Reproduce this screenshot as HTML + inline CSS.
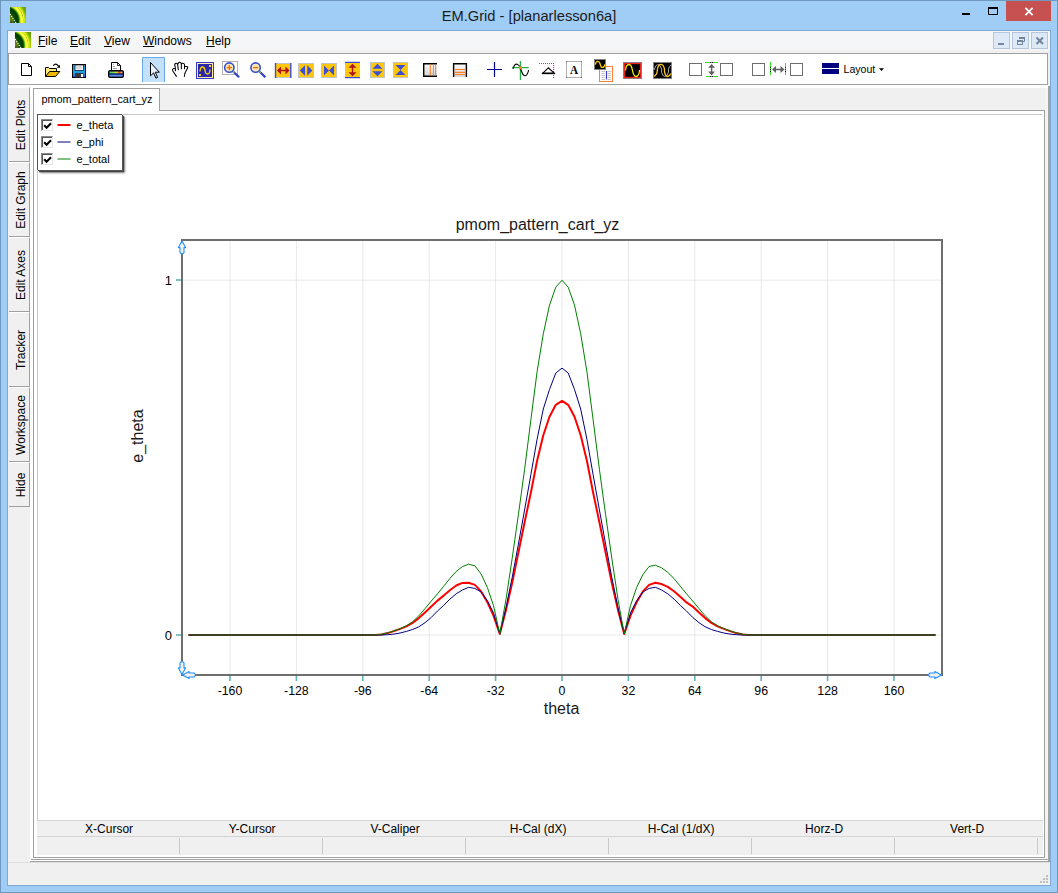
<!DOCTYPE html>
<html lang="en">
<head>
<meta charset="utf-8">
<title>EM.Grid - [planarlesson6a]</title>
<style>
html,body{margin:0;padding:0;}
body{width:1058px;height:893px;overflow:hidden;background:#9fcdf5;font-family:"Liberation Sans",sans-serif;color:#000;position:relative;}
.a{position:absolute;box-sizing:border-box;}
#frame{left:0;top:0;width:1058px;height:893px;border:1px solid #7097bd;background:#9fcdf5;}
#inner{left:7px;top:30px;width:1044px;height:856px;border:1px solid #7ea9d4;}
#title{left:0;top:5.5px;width:1058px;text-align:center;font-size:14.7px;line-height:20px;color:#1c1c1c;}
#client{left:8px;top:31px;width:1042px;height:854px;background:#f0f0f0;}
#menubar{left:8px;top:31px;width:1042px;height:19px;background:#f5f6f7;}
.mi{font-size:12px;line-height:16px;top:33px;}
.mi u{text-decoration:underline;}
.mdib{top:32px;width:17px;height:17px;background:#dde9f6;border:1px solid #b4c6dd;}
#toolbar{left:8px;top:53px;width:1040px;height:32px;background:#fff;border:1px solid #a0a0a0;}
.stab{left:9px;width:21px;background:#f0f0f0;border-top:1px solid #fff;border-bottom:1px solid #a0a0a0;border-right:1px solid #a0a0a0;}
.stab span{position:absolute;left:calc(50% + 1.5px);top:50%;transform:translate(-50%,-50%) rotate(-90deg);white-space:nowrap;font-size:12px;line-height:14px;}
#mainwhite{left:8px;top:85px;width:1040px;height:776px;background:#fff;}
#sidebg{left:8px;top:88px;width:22px;height:774px;background:#f0f0f0;}
#tabstrip{left:160px;top:88px;width:888px;height:22px;background:#f0f0f0;}
#rb{left:1048px;top:86px;width:2px;height:776px;background:#a2a2a2;}
#rstrip{left:1045px;top:88px;width:3px;height:771px;background:#f4f4f4;}
#b1{left:31px;top:859px;width:1018px;height:1px;background:#a2a2a2;}
#b2{left:30px;top:861px;width:1020px;height:1px;background:#a2a2a2;}
#stl{left:8px;top:862px;width:1042px;height:1px;background:#dedede;}
#tabpanel{left:33px;top:110px;width:1012px;height:748px;background:#fff;border:1px solid #a0a0a0;}
#tab{left:33px;top:88px;width:127px;height:23px;background:#fff;border:1px solid #a0a0a0;border-bottom:none;font-size:10.85px;line-height:21px;padding-left:7.5px;}
#hdr{left:37px;top:820px;width:1006px;height:17px;background:#f0f0f0;border-top:1px solid #d4d4d4;border-bottom:1px solid #d4d4d4;}
#cells{left:37px;top:837px;width:1006px;height:18px;background:#f0f0f0;}
.hc{top:822px;width:143px;text-align:center;font-size:12px;line-height:14px;}
.cs{top:838px;width:1px;height:16px;background:#c8c8c8;}
#graph{left:37px;top:114px;width:1005px;height:707px;background:#fff;border-left:1px solid #c8c8c8;border-top:1px solid #c8c8c8;}
#legend{left:37px;top:114px;width:84.5px;height:56px;background:#fff;border-top:1px solid #555;border-left:1px solid #555;box-shadow:1px 1px 0 #555,2px 2px 1px #444,3px 3px 2px rgba(0,0,0,.45);}
.cb{left:41px;width:12px;height:12px;background:#fff;border-top:1px solid #8a8a8a;border-left:1px solid #8a8a8a;border-right:1px solid #e8e8e8;border-bottom:1px solid #e8e8e8;box-shadow:inset 1px 1px 0 #555;}
.lt{left:76.6px;font-size:11px;line-height:12px;}
#status{left:8px;top:862px;width:1042px;height:23px;background:#f0f0f0;}
</style>
</head>
<body>
<div class="a" id="frame"></div>
<div class="a" id="inner"></div>
<div class="a" id="title">EM.Grid - [planarlesson6a]</div>
<div class="a" id="client"></div>
<div class="a" id="menubar"></div>
<div class="a mi" style="left:38px"><u>F</u>ile</div>
<div class="a mi" style="left:70px"><u>E</u>dit</div>
<div class="a mi" style="left:104px"><u>V</u>iew</div>
<div class="a mi" style="left:143px"><u>W</u>indows</div>
<div class="a mi" style="left:206px"><u>H</u>elp</div>
<div class="a mdib" style="left:993px"></div>
<div class="a mdib" style="left:1012px"></div>
<div class="a mdib" style="left:1031px"></div>
<div class="a" id="mainwhite"></div>
<div class="a" id="sidebg"></div>
<div class="a" id="tabstrip"></div>
<div class="a" id="rstrip"></div>
<div class="a" id="rb"></div>
<div class="a" id="b1"></div>
<div class="a" id="b2"></div>
<div class="a" id="toolbar"></div>
<div class="a stab" style="top:87px;height:75px"><span>Edit Plots</span></div>
<div class="a stab" style="top:162px;height:75px"><span>Edit Graph</span></div>
<div class="a stab" style="top:237px;height:75px"><span>Edit Axes</span></div>
<div class="a stab" style="top:312px;height:75px"><span>Tracker</span></div>
<div class="a stab" style="top:387px;height:75px"><span>Workspace</span></div>
<div class="a stab" style="top:462px;height:45px"><span>Hide</span></div>
<div class="a" id="tabpanel"></div>
<div class="a" id="tab">pmom_pattern_cart_yz</div>
<div class="a" id="graph"></div>
<svg class="a" id="chart" style="left:36px;top:112px" width="1007" height="708" viewBox="36 112 1007 708" font-family="Liberation Sans, sans-serif">
<line x1="230.0" y1="241" x2="230.0" y2="674" stroke="#d2d2d2" stroke-width="1" stroke-dasharray="1 1" stroke-dashoffset="0.3"/>
<line x1="296.4" y1="241" x2="296.4" y2="674" stroke="#d2d2d2" stroke-width="1" stroke-dasharray="1 1" stroke-dashoffset="0.3"/>
<line x1="362.8" y1="241" x2="362.8" y2="674" stroke="#d2d2d2" stroke-width="1" stroke-dasharray="1 1" stroke-dashoffset="0.3"/>
<line x1="429.2" y1="241" x2="429.2" y2="674" stroke="#d2d2d2" stroke-width="1" stroke-dasharray="1 1" stroke-dashoffset="0.3"/>
<line x1="495.6" y1="241" x2="495.6" y2="674" stroke="#d2d2d2" stroke-width="1" stroke-dasharray="1 1" stroke-dashoffset="0.3"/>
<line x1="562.0" y1="241" x2="562.0" y2="674" stroke="#d2d2d2" stroke-width="1" stroke-dasharray="1 1" stroke-dashoffset="0.3"/>
<line x1="628.4" y1="241" x2="628.4" y2="674" stroke="#d2d2d2" stroke-width="1" stroke-dasharray="1 1" stroke-dashoffset="0.3"/>
<line x1="694.8" y1="241" x2="694.8" y2="674" stroke="#d2d2d2" stroke-width="1" stroke-dasharray="1 1" stroke-dashoffset="0.3"/>
<line x1="761.2" y1="241" x2="761.2" y2="674" stroke="#d2d2d2" stroke-width="1" stroke-dasharray="1 1" stroke-dashoffset="0.3"/>
<line x1="827.6" y1="241" x2="827.6" y2="674" stroke="#d2d2d2" stroke-width="1" stroke-dasharray="1 1" stroke-dashoffset="0.3"/>
<line x1="894.0" y1="241" x2="894.0" y2="674" stroke="#d2d2d2" stroke-width="1" stroke-dasharray="1 1" stroke-dashoffset="0.3"/>
<line x1="183" y1="280.2" x2="941" y2="280.2" stroke="#d2d2d2" stroke-width="1" stroke-dasharray="1 1" stroke-dashoffset="0.3"/>
<line x1="183" y1="635.0" x2="941" y2="635.0" stroke="#d2d2d2" stroke-width="1" stroke-dasharray="1 1" stroke-dashoffset="0.3"/>
<polyline points="188.5,635.0 375.2,635.0 381.5,634.4 387.7,633.1 393.9,631.1 400.1,628.9 406.4,626.3 412.6,622.9 418.8,618.1 425.0,612.5 431.3,606.6 437.5,600.6 443.7,595.6 449.9,590.2 456.2,585.5 462.4,582.9 468.6,582.8 474.9,584.9 481.1,591.4 487.3,602.0 493.5,615.6 499.8,634.0 506.0,610.1 512.2,582.9 518.4,552.5 524.6,522.3 530.9,492.5 537.1,460.8 543.3,435.2 549.5,416.8 555.8,404.8 562.0,400.9 568.2,404.8 574.5,416.8 580.7,435.2 586.9,460.8 593.1,492.5 599.4,522.3 605.6,552.5 611.8,582.9 618.0,610.1 624.2,634.0 630.5,615.6 636.7,602.0 642.9,591.4 649.1,584.9 655.4,582.8 661.6,584.1 667.8,586.9 674.0,591.2 680.3,596.7 686.5,602.4 692.7,606.6 699.0,612.5 705.2,618.1 711.4,622.9 717.6,626.3 723.9,628.9 730.1,631.1 736.3,633.1 742.5,634.4 748.8,635.0 935.5,635.0" fill="none" stroke="#ff0000" stroke-width="2" stroke-linejoin="round"/>
<polyline points="188.5,635.0 375.2,635.0 381.5,635.0 387.7,634.7 393.9,634.1 400.1,633.0 406.4,631.4 412.6,629.5 418.8,626.8 425.0,622.7 431.3,617.4 437.5,611.0 443.7,605.4 449.9,599.1 456.2,593.8 462.4,590.0 468.6,587.3 474.9,588.4 481.1,592.0 487.3,600.6 493.5,612.9 499.8,634.0 506.0,607.6 512.2,577.4 518.4,544.1 524.6,509.9 530.9,474.6 537.1,439.2 543.3,409.0 549.5,389.5 555.8,373.0 562.0,368.1 568.2,373.0 574.5,389.5 580.7,409.0 586.9,439.2 593.1,474.6 599.4,509.9 605.6,544.1 611.8,577.4 618.0,607.6 624.2,634.0 630.5,612.9 636.7,600.6 642.9,592.0 649.1,588.4 655.4,587.3 661.6,590.0 667.8,593.8 674.0,599.1 680.3,605.4 686.5,611.0 692.7,617.4 699.0,622.7 705.2,626.8 711.4,629.5 717.6,631.4 723.9,633.0 730.1,634.1 736.3,634.7 742.5,635.0 748.8,635.0 935.5,635.0" fill="none" stroke="#000080" stroke-width="1" stroke-linejoin="round"/>
<polyline points="188.5,635.0 375.2,635.0 381.5,634.2 387.7,632.9 393.9,630.8 400.1,628.7 406.4,625.7 412.6,621.8 418.8,615.8 425.0,608.6 431.3,601.0 437.5,593.8 443.7,586.3 449.9,578.5 456.2,571.5 462.4,566.6 468.6,564.2 474.9,565.8 481.1,574.0 487.3,587.3 493.5,605.6 499.8,634.0 506.0,599.4 512.2,558.2 518.4,514.6 524.6,469.3 530.9,419.6 537.1,371.6 543.3,333.8 549.5,305.1 555.8,287.2 562.0,280.2 568.2,287.2 574.5,305.1 580.7,333.8 586.9,371.6 593.1,419.6 599.4,469.3 605.6,514.6 611.8,558.2 618.0,599.4 624.2,634.0 630.5,605.6 636.7,587.3 642.9,574.6 649.1,566.5 655.4,565.2 661.6,567.8 667.8,572.4 674.0,578.5 680.3,586.3 686.5,593.8 692.7,601.0 699.0,608.6 705.2,615.8 711.4,621.8 717.6,625.7 723.9,628.7 730.1,630.8 736.3,632.9 742.5,634.2 748.8,635.0 935.5,635.0" fill="none" stroke="#008000" stroke-width="1" stroke-linejoin="round"/>
<rect x="182" y="240" width="760" height="435" fill="none" stroke="#6e6e6e" stroke-width="2"/>
<line x1="230.0" y1="676" x2="230.0" y2="681" stroke="#62b0b0" stroke-width="1.6"/>
<text transform="translate(230.0,695) scale(0.95,1)" font-size="13" text-anchor="middle">-160</text>
<line x1="296.4" y1="676" x2="296.4" y2="681" stroke="#62b0b0" stroke-width="1.6"/>
<text transform="translate(296.4,695) scale(0.95,1)" font-size="13" text-anchor="middle">-128</text>
<line x1="362.8" y1="676" x2="362.8" y2="681" stroke="#62b0b0" stroke-width="1.6"/>
<text transform="translate(362.8,695) scale(0.95,1)" font-size="13" text-anchor="middle">-96</text>
<line x1="429.2" y1="676" x2="429.2" y2="681" stroke="#62b0b0" stroke-width="1.6"/>
<text transform="translate(429.2,695) scale(0.95,1)" font-size="13" text-anchor="middle">-64</text>
<line x1="495.6" y1="676" x2="495.6" y2="681" stroke="#62b0b0" stroke-width="1.6"/>
<text transform="translate(495.6,695) scale(0.95,1)" font-size="13" text-anchor="middle">-32</text>
<line x1="562.0" y1="676" x2="562.0" y2="681" stroke="#62b0b0" stroke-width="1.6"/>
<text transform="translate(562.0,695) scale(0.95,1)" font-size="13" text-anchor="middle">0</text>
<line x1="628.4" y1="676" x2="628.4" y2="681" stroke="#62b0b0" stroke-width="1.6"/>
<text transform="translate(628.4,695) scale(0.95,1)" font-size="13" text-anchor="middle">32</text>
<line x1="694.8" y1="676" x2="694.8" y2="681" stroke="#62b0b0" stroke-width="1.6"/>
<text transform="translate(694.8,695) scale(0.95,1)" font-size="13" text-anchor="middle">64</text>
<line x1="761.2" y1="676" x2="761.2" y2="681" stroke="#62b0b0" stroke-width="1.6"/>
<text transform="translate(761.2,695) scale(0.95,1)" font-size="13" text-anchor="middle">96</text>
<line x1="827.6" y1="676" x2="827.6" y2="681" stroke="#62b0b0" stroke-width="1.6"/>
<text transform="translate(827.6,695) scale(0.95,1)" font-size="13" text-anchor="middle">128</text>
<line x1="894.0" y1="676" x2="894.0" y2="681" stroke="#62b0b0" stroke-width="1.6"/>
<text transform="translate(894.0,695) scale(0.95,1)" font-size="13" text-anchor="middle">160</text>
<line x1="176" y1="280" x2="181" y2="280" stroke="#62b0b0" stroke-width="1.6"/>
<text x="172" y="285" font-size="13" text-anchor="end">1</text>
<line x1="176" y1="635" x2="181" y2="635" stroke="#62b0b0" stroke-width="1.6"/>
<text x="172" y="640" font-size="13" text-anchor="end">0</text>
<text x="537.5" y="230" font-size="16" text-anchor="middle" fill="#1a1a1a">pmom_pattern_cart_yz</text>
<text x="561.5" y="714" font-size="16" text-anchor="middle" fill="#1a1a1a">theta</text>
<text transform="translate(143,436) rotate(-90)" font-size="16" text-anchor="middle" fill="#1a1a1a">e_theta</text>
<path d="M182,241 L178.4,247.6 L180,247.6 L180,252.6 Q182,255 184,252.6 L184,247.6 L185.6,247.6 Z" fill="#f6f1ea" stroke="#1e90ff" stroke-width="1.1" stroke-linejoin="round"/>
<path d="M182,674.5 L178.4,667.9 L180,667.9 L180,662.9 Q182,660.5 184,662.9 L184,667.9 L185.6,667.9 Z" fill="#f6f1ea" stroke="#1e90ff" stroke-width="1.1" stroke-linejoin="round"/>
<path d="M182.5,675 L189.1,671.4 L189.1,673 L194.1,673 Q196.5,675 194.1,677 L189.1,677 L189.1,678.6 Z" fill="#f6f1ea" stroke="#1e90ff" stroke-width="1.1" stroke-linejoin="round"/>
<path d="M941.5,675 L934.9,671.4 L934.9,673 L929.9,673 Q927.5,675 929.9,677 L934.9,677 L934.9,678.6 Z" fill="#f6f1ea" stroke="#1e90ff" stroke-width="1.1" stroke-linejoin="round"/>
</svg>
<div class="a" id="legend"></div>
<div class="a cb" style="top:119px"></div>
<div class="a cb" style="top:136px"></div>
<div class="a cb" style="top:153px"></div>
<div class="a lt" style="top:119px">e_theta</div>
<div class="a lt" style="top:136px">e_phi</div>
<div class="a lt" style="top:153px">e_total</div>
<svg class="a" style="left:37px;top:114px" width="90" height="60" viewBox="37 114 90 60">
<path d="M57.5,125 H70.5" stroke="#ff0000" stroke-width="2"/>
<path d="M57.5,142 H70.5" stroke="#000080" stroke-width="1"/>
<path d="M57.5,159 H70.5" stroke="#008000" stroke-width="1"/>
<path d="M44.2,125.2 L46.6,127.7 L51,123.2 M44.2,142.2 L46.6,144.7 L51,140.2 M44.2,159.2 L46.6,161.7 L51,157.2" stroke="#000" stroke-width="2" fill="none"/>
</svg>
<div class="a" id="hdr"></div>
<div class="a" id="cells"></div>
<div class="a hc" style="left:37.6px">X-Cursor</div>
<div class="a hc" style="left:180.6px">Y-Cursor</div>
<div class="a hc" style="left:323.6px">V-Caliper</div>
<div class="a hc" style="left:466.6px">H-Cal (dX)</div>
<div class="a hc" style="left:609.6px">H-Cal (1/dX)</div>
<div class="a hc" style="left:752.6px">Horz-D</div>
<div class="a hc" style="left:895.6px">Vert-D</div>
<div class="a cs" style="left:179px"></div>
<div class="a cs" style="left:322px"></div>
<div class="a cs" style="left:465px"></div>
<div class="a cs" style="left:608px"></div>
<div class="a cs" style="left:751px"></div>
<div class="a cs" style="left:894px"></div>
<div class="a cs" style="left:1037px"></div>
<div class="a" id="status"></div>
<div class="a" id="stl"></div>
<svg class="a" id="icons" style="left:0;top:0" width="1058" height="893" viewBox="0 0 1058 893" font-family="Liberation Sans, sans-serif">
<defs>
<radialGradient id="gi" gradientUnits="userSpaceOnUse" cx="-5" cy="13.5" r="24"><stop offset="0.000" stop-color="#7c9c14"/><stop offset="0.312" stop-color="#587e08"/><stop offset="0.396" stop-color="#0c4c0a"/><stop offset="0.550" stop-color="#043a04"/><stop offset="0.600" stop-color="#3c9c10"/><stop offset="0.642" stop-color="#d0ec20"/><stop offset="0.679" stop-color="#ffff40"/><stop offset="0.733" stop-color="#ffff38"/><stop offset="0.758" stop-color="#b4c430"/><stop offset="0.783" stop-color="#f2f830"/><stop offset="0.842" stop-color="#a8d800"/><stop offset="0.917" stop-color="#74aa00"/><stop offset="1.000" stop-color="#6a9e00"/></radialGradient>
<g id="appicon"><rect x="0" y="0" width="16" height="16" fill="url(#gi)"/><path d="M0,7 L6,16" stroke="#fff" stroke-width="1.2" stroke-dasharray="1.2 1.2" fill="none"/><rect x="0" y="14" width="2" height="2" fill="#444" opacity="0.7"/></g>
<linearGradient id="gg" x1="0" y1="0" x2="0" y2="1"><stop offset="0" stop-color="#fafafa"/><stop offset="1" stop-color="#d4d4d4"/></linearGradient>
<linearGradient id="gs" x1="0" y1="0" x2="0" y2="1"><stop offset="0" stop-color="#18a8f0"/><stop offset="0.7" stop-color="#18a0ee"/><stop offset="1" stop-color="#3838d8"/></linearGradient>
<linearGradient id="gp" x1="0" y1="0" x2="1" y2="0"><stop offset="0" stop-color="#30d070"/><stop offset="0.55" stop-color="#c8f020"/><stop offset="0.75" stop-color="#ff3020"/><stop offset="1" stop-color="#ffd020"/></linearGradient>
</defs>
<use href="#appicon" x="10" y="7"/>
<use href="#appicon" x="15" y="32"/>
<rect x="962" y="13" width="8" height="2" fill="#000"/>
<path d="M988.5,8 H997.5 V14.5 H988.5 Z" fill="none" stroke="#000" stroke-width="1"/><rect x="988" y="7" width="10" height="2" fill="#000"/>
<rect x="1006" y="1" width="45" height="20" fill="#c75050"/>
<path d="M1025.4,7.9 L1032.6,15.1 M1032.6,7.9 L1025.4,15.1" stroke="#fff" stroke-width="1.8" fill="none"/>
<rect x="998" y="43" width="6" height="2" fill="#73859c"/>
<path d="M1019.5,39 V37.5 H1024.5 V41.5 H1023" fill="none" stroke="#73859c" stroke-width="1"/><rect x="1019" y="37" width="6" height="2" fill="#73859c"/><rect x="1017.5" y="40.5" width="5" height="4" fill="none" stroke="#73859c" stroke-width="1"/><rect x="1017" y="40" width="6" height="2" fill="#73859c"/>
<path d="M1036.5,37.5 L1043,44 M1043,37.5 L1036.5,44" stroke="#73859c" stroke-width="2" fill="none"/>
<path d="M21.5,63.5 H28.5 L31.5,66.5 V75.5 H21.5 Z" fill="#fff" stroke="#000" stroke-width="1"/><path d="M28.5,63.5 V66.5 H31.5" fill="none" stroke="#000" stroke-width="1"/>
<path d="M45.5,76.5 V67.5 H48.5 L49.5,68.5 H56.5 V71" fill="#ffe880" stroke="#000" stroke-width="1"/>
<path d="M45.5,76.5 L49.5,71.5 H59.8 L55.5,76.5 Z" fill="#f0b800" stroke="#000" stroke-width="1"/>
<path d="M53.3,65.7 Q55.8,62.4 58.6,66.4" fill="none" stroke="#000" stroke-width="1.25"/><path d="M56.8,67.8 H60 V64.8 Z" fill="#000"/>
<rect x="72.5" y="64.5" width="13" height="13" fill="url(#gs)" stroke="#000" stroke-width="1"/>
<rect x="75" y="65" width="8.5" height="5.5" fill="#fff" stroke="#000" stroke-width="0.7"/><rect x="76" y="66" width="6" height="3.5" fill="#d8d8d8"/>
<rect x="75" y="73" width="8.5" height="4.5" fill="#383838"/><rect x="81" y="74" width="2" height="3" fill="#fff"/><rect x="84" y="65.5" width="1" height="1" fill="#666"/>
<path d="M111.5,70.5 V62.5 H117.5 L120.5,65.5 V70.5 Z" fill="#fff" stroke="#000" stroke-width="1"/><path d="M117.5,62.5 V65.5 H120.5" fill="none" stroke="#000" stroke-width="0.8"/>
<path d="M113,64.5 H114 M113,66.5 H115 M113,68.5 H117" stroke="#888" stroke-width="0.8"/>
<rect x="108.5" y="70.5" width="15" height="7" rx="1.2" fill="#101040" stroke="#000" stroke-width="1"/>
<rect x="109.5" y="71.6" width="13" height="1.8" fill="url(#gp)"/><rect x="109.5" y="73.6" width="13" height="1" fill="#0838a0"/><rect x="109.5" y="74.8" width="13" height="1.8" fill="#5a8ae0"/>
<rect x="142" y="57" width="23" height="25" fill="#c3e0fd"/><path d="M142.5,82 V57.5 H164.5 V82" fill="none" stroke="#6aa8e8" stroke-width="1"/>
<path d="M150.5,62.5 V75.8 L153.6,72.9 L155.9,78.2 L157.6,77.4 L155.3,72.2 H159.3 Z" fill="#e8f2fc" stroke="#000" stroke-width="1" stroke-linejoin="miter"/>
<path d="M176.4,76.4 L173.3,71.8 Q171.6,69.2 173.7,68.4 L175.4,68.4 M175.5,70.8 L175.2,66.8 Q174.1,64 175.4,63.4 Q176.9,62.9 177.6,64.4 L178.3,69.8 M177.9,64.2 Q178.4,62.3 179.6,62.3 Q181,62.3 181.3,63.5 L181.4,68.8 M181.5,63.9 Q182.3,63 183,63.2 Q184.4,63.4 184.5,64.8 L184.5,68.8 M185.2,66.5 L186.7,66.5 Q188.1,66.9 187.6,68.1 L185.5,72 L184.7,74 L184.4,76.4" fill="none" stroke="#000" stroke-width="1.05" stroke-linecap="round" stroke-linejoin="round"/>
<rect x="196.5" y="62.5" width="17" height="16" fill="#2828a8" stroke="#3838c8" stroke-width="1"/><rect x="197.5" y="63.5" width="15" height="14" fill="none" stroke="#ffe9a8" stroke-width="1"/>
<path d="M200,71.5 Q200.2,67 202.5,67 Q204.6,67 205,70.5 Q205.4,74 207.5,74 Q209.8,74 210,69.5" fill="none" stroke="#ffd000" stroke-width="1.3"/><rect x="209" y="65" width="2" height="2" fill="#ffd000"/><rect x="199" y="74" width="2" height="2" fill="#ffd000"/>
<rect x="222.5" y="61.5" width="15" height="13" fill="none" stroke="#b4b4b4" stroke-width="1"/>
<path d="M232.9,71.2 L239.1,77.3" stroke="#3040c8" stroke-width="2.2" fill="none"/>
<path d="M232.7,71 L234.3,72.6" stroke="#a0d020" stroke-width="1.5" fill="none"/>
<circle cx="229.3" cy="67.6" r="4.7" fill="#f8e8b4" stroke="#3a50d0" stroke-width="1.6"/>
<path d="M226.6,67.6 H232.0" stroke="#ff6a00" stroke-width="1.3"/>
<path d="M229.3,65 V70.3" stroke="#ff6a00" stroke-width="1.3"/>
<path d="M259.2,71.2 L265.4,77.3" stroke="#3040c8" stroke-width="2.2" fill="none"/>
<path d="M259.0,71 L260.6,72.6" stroke="#a0d020" stroke-width="1.5" fill="none"/>
<circle cx="255.6" cy="67.6" r="4.7" fill="#f8e8b4" stroke="#3a50d0" stroke-width="1.6"/>
<path d="M252.9,67.6 H258.3" stroke="#ff6a00" stroke-width="1.3"/>
<rect x="275.5" y="63.5" width="15" height="14" fill="#ffc60a" stroke="#c4c4c4" stroke-width="1"/>
<path d="M275.5,63 V78 M290.8,63 V78" stroke="#3c4fd2" stroke-width="1.4"/>
<path d="M277,70.5 L281,66.5 V69.8 H285.5 V66.5 L289.5,70.5 L285.5,74.5 V71.2 H281 V74.5 Z" fill="#b0121e"/>
<rect x="298.5" y="63.5" width="15" height="14" fill="#ffc60a" stroke="#c4c4c4" stroke-width="1"/>
<path d="M299.8,70.5 L305,65.3 V75.7 Z M312.4,70.5 L307.3,65.3 V75.7 Z" fill="#3c4fd2"/>
<rect x="321.5" y="63.5" width="15" height="14" fill="#ffc60a" stroke="#c4c4c4" stroke-width="1"/>
<path d="M324,65.5 L329,70.5 L334,65.5 V75.5 L329,70.5 L324,75.5 Z" fill="#3c4fd2"/>
<rect x="345.5" y="62.5" width="14" height="15" fill="#ffc60a" stroke="#c4c4c4" stroke-width="1"/>
<path d="M345,62.4 H360 M345,77.6 H360" stroke="#3c4fd2" stroke-width="1.4"/>
<path d="M352.5,63.8 L356.5,67.8 H353.2 V72.2 H356.5 L352.5,76.2 L348.5,72.2 H351.8 V67.8 H348.5 Z" fill="#b0121e"/>
<rect x="370.5" y="62.5" width="14" height="15" fill="#ffc60a" stroke="#c4c4c4" stroke-width="1"/>
<path d="M377.5,63.8 L382.5,68.8 H372.5 Z M377.5,76.2 L382.5,71.2 H372.5 Z" fill="#3c4fd2"/>
<rect x="393.5" y="62.5" width="14" height="15" fill="#ffc60a" stroke="#c4c4c4" stroke-width="1"/>
<path d="M395.5,65 H405.5 L400.5,70 L405.5,75 H395.5 L400.5,70 Z" fill="#3c4fd2"/>
<rect x="424" y="64" width="13" height="12" fill="url(#gg)"/><path d="M437,63.7 H423.7 V76.3 H437" fill="none" stroke="#000" stroke-width="1.4"/>
<path d="M430.3,64.5 V75.5 M433.4,64.5 V75.5 M435.6,64.5 V75.5" stroke="#ff7f20" stroke-width="1"/>
<rect x="454" y="64" width="12" height="13" fill="url(#gg)"/><path d="M453.6,77 V63.7 H466.4 V77" fill="none" stroke="#000" stroke-width="1.4"/>
<path d="M454.5,69.5 H465.5 M454.5,72.3 H465.5 M454.5,74.5 H465.5" stroke="#ff7f20" stroke-width="1.2"/>
<path d="M487,69.5 H502 M494.5,62 V77" stroke="#000090" stroke-width="1.2"/>
<path d="M520.4,61 V80 M512,67.6 H528.8" stroke="#22b048" stroke-width="1.2"/>
<path d="M513,68.8 Q514.5,63.8 517,64.2 Q519,64.6 520.4,68 Q522,73.5 523.5,75 Q525.5,76.6 527,74.5 Q528.3,72.5 528.6,70" fill="none" stroke="#000" stroke-width="1.1"/>
<rect x="519" y="66.2" width="3" height="3" fill="#ff7f20"/>
<path d="M539,63.5 H554" stroke="#ff00ff" stroke-width="1.2" stroke-dasharray="1 1" fill="none"/><path d="M553.6,65 V78" stroke="#ff00ff" stroke-width="1.2" stroke-dasharray="1 1" fill="none"/>
<path d="M548.3,67.8 L542.8,73.2 H554.2 Z" fill="#fff" stroke="#000" stroke-width="1.1" stroke-linejoin="miter"/><path d="M542,73.4 H555" stroke="#000" stroke-width="1.5"/>
<rect x="566.5" y="61.5" width="15" height="16" fill="#fff" stroke="#b0b0b0" stroke-width="1"/>
<rect x="566" y="61" width="1" height="1" fill="#666"/><rect x="581" y="61" width="1" height="1" fill="#666"/><rect x="566" y="77" width="1" height="1" fill="#666"/><rect x="581" y="77" width="1" height="1" fill="#666"/>
<text transform="translate(574,74) scale(0.86,1)" font-family="Liberation Serif, serif" font-weight="bold" font-size="13" text-anchor="middle" fill="#000">A</text>
<rect x="599.5" y="66.5" width="13" height="15" fill="#fff" stroke="#ff8030" stroke-width="1"/>
<path d="M601.5,71.5 H605 M608,71.5 H611 M601.5,73.5 H605 M608,73.5 H611 M601.5,75.5 H605 M608,75.5 H611 M601.5,77.5 H605 M608,77.5 H611 M601.5,79.5 H605 M608,79.5 H611" stroke="#c4c4c4" stroke-width="1"/><path d="M606.5,71 V79.5" stroke="#3838d0" stroke-width="1.2"/>
<rect x="594.5" y="59.5" width="11" height="10" fill="#000" stroke="#808080" stroke-width="1"/>
<path d="M595.3,64.6 Q595.8,61.3 597.7,61.3 Q599.6,61.3 600.2,64.3 Q600.9,67.4 602.4,67.4 Q604.3,67.4 604.8,64.3" fill="none" stroke="#ffd000" stroke-width="1.3"/>
<rect x="623.5" y="62.5" width="18" height="16" fill="#000" stroke="#808890" stroke-width="1"/><rect x="624.5" y="63.5" width="16" height="14" fill="none" stroke="#e82020" stroke-width="1.3"/>
<path d="M625.5,70.5 Q626,64.5 629,64.5 Q631.5,64.5 632.5,70.5 Q633.5,76.5 636,76.5 Q639,76.5 639.6,70" fill="none" stroke="#f8f000" stroke-width="1.3"/>
<rect x="653.5" y="62.5" width="18" height="16" fill="#000" stroke="#808080" stroke-width="1"/>
<path d="M654.2,70 Q655.3,64.5 657.8,64.5 Q660.4,64.7 661.6,69 L661.6,72.3 Q662.6,76.5 664.8,76.5 Q667.4,76.3 668.5,72 L668.5,69 Q669.3,66 671,65.2" fill="none" stroke="#a8a8a8" stroke-width="1"/>
<path d="M654.2,76.5 L656.5,73.9 Q657.3,72 657.5,68.8 Q658.5,64.3 660.8,64.3 Q663.4,64.3 664.5,69 L664.5,72 Q665.5,76.5 667.7,76.5 Q669.8,76.3 670.8,73.6" fill="none" stroke="#ffc814" stroke-width="1.3"/>
<rect x="689.5" y="63.5" width="12" height="12" fill="#fff" stroke="#6e6e6e" stroke-width="1"/>
<rect x="720.5" y="63.5" width="12" height="12" fill="#fff" stroke="#6e6e6e" stroke-width="1"/>
<rect x="752.5" y="63.5" width="12" height="12" fill="#fff" stroke="#6e6e6e" stroke-width="1"/>
<rect x="790.5" y="63.5" width="12" height="12" fill="#fff" stroke="#6e6e6e" stroke-width="1"/>
<path d="M705,62.5 H718 M706,76.5 H718" stroke="#30e020" stroke-width="1"/><path d="M710,62.5 H714 M710,76.5 H714" stroke="#222" stroke-width="1" stroke-dasharray="1 1"/>
<path d="M711.6,64 L715,67.8 H712.3 V71.6 H715 L711.6,75.4 L708.2,71.6 H710.9 V67.8 H708.2 Z" fill="#606060"/>
<path d="M770.5,62 V75 M785.5,63 V75" stroke="#30e020" stroke-width="1"/><path d="M770.5,67 V72 M785.5,67 V72" stroke="#222" stroke-width="1" stroke-dasharray="1 1"/>
<path d="M772,69.5 L776,66 V68.8 H780.5 V66 L784.5,69.5 L780.5,73 V70.2 H776 V73 Z" fill="#606060"/>
<rect x="822" y="63" width="17" height="11" fill="#000080"/><rect x="822" y="68" width="17" height="1" fill="#fff"/>
<text x="843.5" y="73" font-size="10.6" fill="#000">Layout</text>
<path d="M879,68.3 H884 L881.5,71 Z" fill="#000"/>
<rect x="1046" y="875" width="2" height="2" fill="#bfbfbf"/>
<rect x="1043" y="878" width="2" height="2" fill="#bfbfbf"/>
<rect x="1046" y="878" width="2" height="2" fill="#bfbfbf"/>
<rect x="1040" y="881" width="2" height="2" fill="#bfbfbf"/>
<rect x="1043" y="881" width="2" height="2" fill="#bfbfbf"/>
<rect x="1046" y="881" width="2" height="2" fill="#bfbfbf"/>
</svg>
</body>
</html>
